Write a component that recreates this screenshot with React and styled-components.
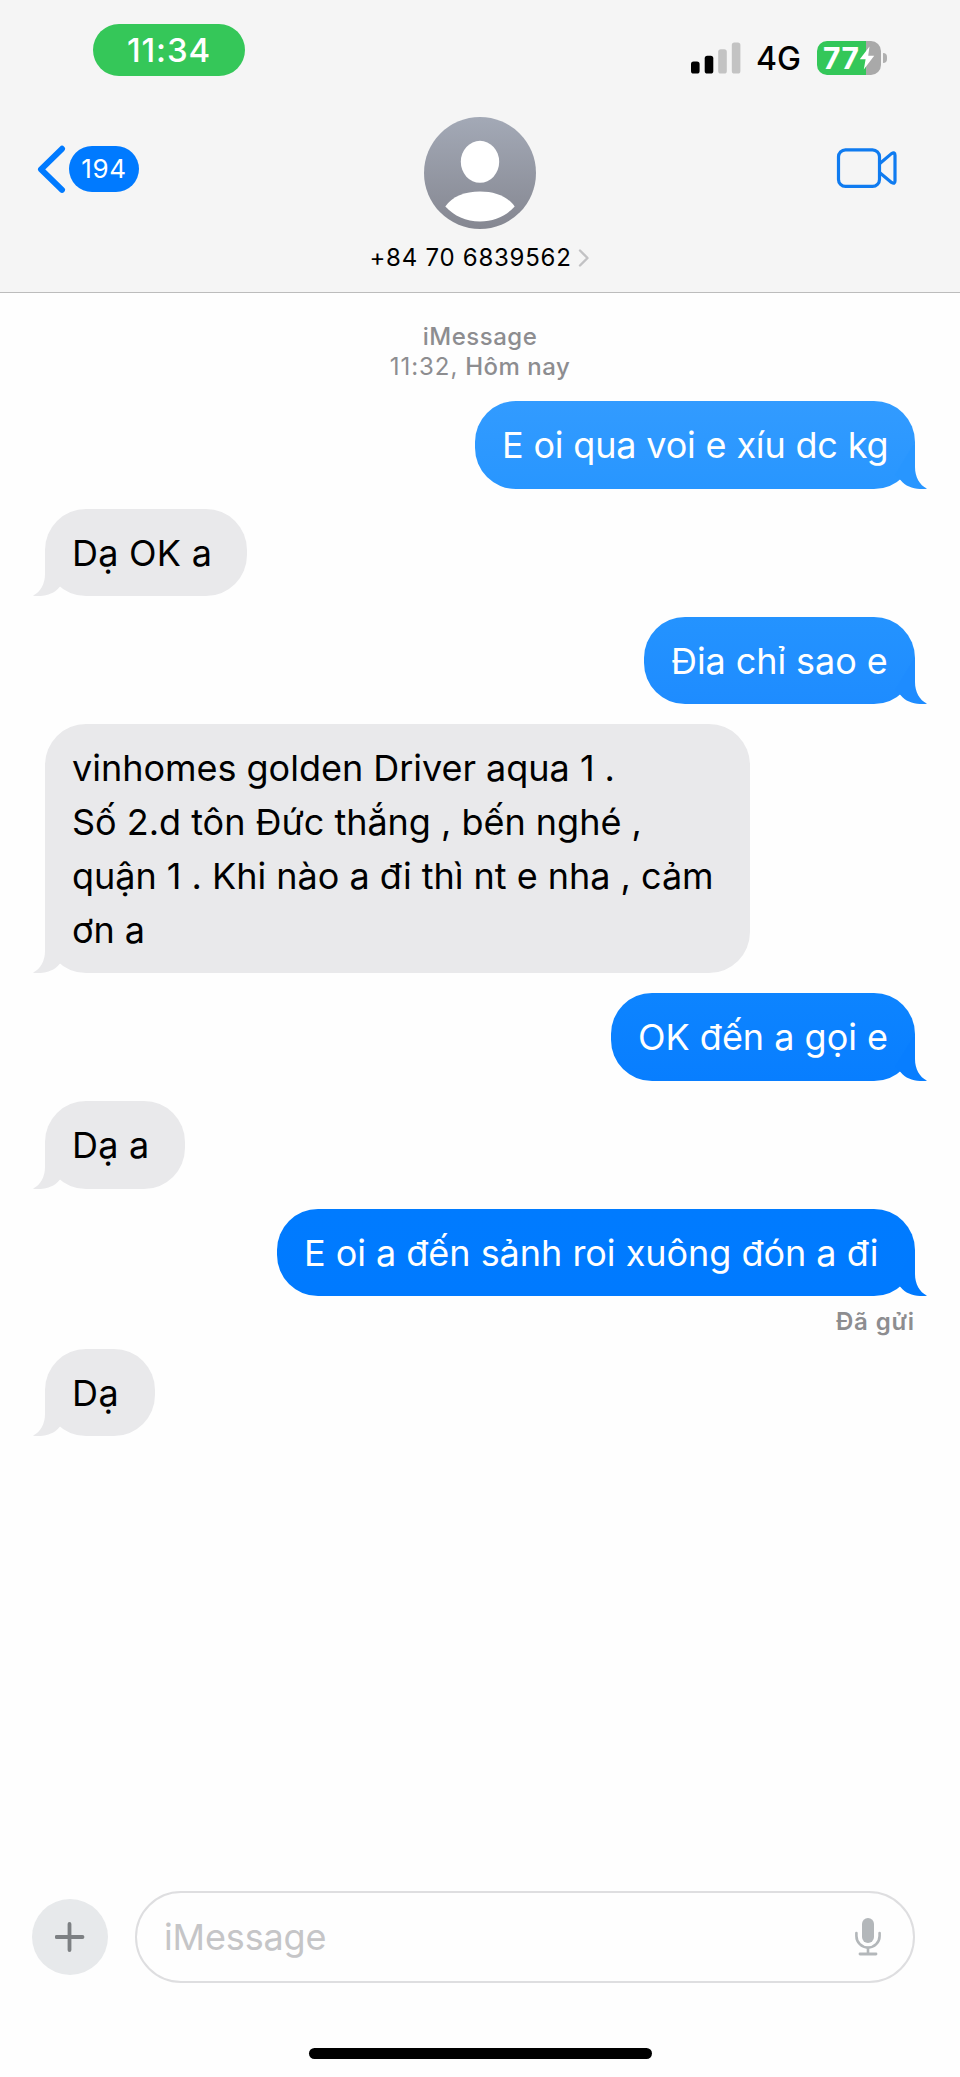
import React from 'react';
import styled, { createGlobalStyle } from 'styled-components';

const GlobalStyle = createGlobalStyle`
    * {
        box-sizing: border-box;
    }

    body {
        margin: 0;
        background: #fefefe;
        font-family: Inter, "Liberation Sans", sans-serif;
    }
`;

const Screen = styled.div`
    width: 960px;
    height: 2077px;
    display: flex;
    flex-direction: column;
    overflow: hidden;
    background: #fefefe;
    color: #000000;
`;

const Header = styled.header`
    height: 293px;
    flex: none;
    background: #f5f5f5;
    border-bottom: 1px solid #bcbcbc;
`;

const StatusBar = styled.div`
    height: 117px;
    display: flex;
    justify-content: space-between;
    align-items: flex-start;
    padding: 24px 73px 0 93px;
`;

const TimePill = styled.div`
    width: 152px;
    height: 52px;
    border-radius: 26px;
    background: #35c759;
    color: #ffffff;
    font-size: 33px;
    font-weight: 500;
    line-height: 53px;
    letter-spacing: 0.9px;
    text-align: center;
`;

const StatusIcons = styled.div`
    display: flex;
    align-items: center;
    padding-top: 15px;
`;

const Network = styled.span`
    width: 61px;
    margin: 3px 0 0 15px;
    font-size: 32px;
    font-weight: 500;
    line-height: 34px;
`;

const Battery = styled.div`
    width: 64px;
    height: 34px;
    display: flex;
    align-items: center;
    padding-left: 6px;
    border-radius: 10px;
    background: linear-gradient(90deg, #34c759 49px, #a9a9a9 49px);
    color: #ffffff;
    font-size: 30px;
    font-weight: 700;
    letter-spacing: 0.5px;
`;

const BatteryCap = styled.span`
    width: 4px;
    height: 10px;
    margin-left: 2px;
    border-radius: 0 5px 5px 0;
    background: #b0b0b0;
`;

const NavBar = styled.div`
    display: grid;
    grid-template-columns: 300px 360px 300px;
`;

const BackButton = styled.div`
    display: flex;
    align-items: center;
    height: 48px;
    margin-top: 28px;
    padding-left: 37px;
`;

const Badge = styled.span`
    width: 70px;
    height: 46px;
    margin-left: 3px;
    border-radius: 23px;
    background: #007aff;
    color: #ffffff;
    font-size: 26px;
    line-height: 46px;
    letter-spacing: 0.7px;
    text-align: center;
`;

const Contact = styled.div`
    display: flex;
    flex-direction: column;
    align-items: center;
`;

const ContactName = styled.div`
    display: flex;
    align-items: center;
    gap: 6px;
    margin-top: 12.5px;
    padding-right: 1px;
    font-size: 24px;
    line-height: 32px;
    letter-spacing: 0.75px;
    white-space: nowrap;
`;

const VideoButton = styled.div`
    display: flex;
    justify-content: flex-end;
    padding: 29px 62px 0 0;
`;

const Conversation = styled.main`
    flex: 1;
    display: flex;
    flex-direction: column;
    padding: 29.3px 45px 0;
`;

const Stamp = styled.div`
    display: flex;
    flex-direction: column;
    align-items: center;
    margin-bottom: 20.4px;
    color: #8d8d90;
    font-size: 24px;
    font-weight: 500;
    line-height: 29.3px;
    letter-spacing: 0.5px;
`;

const StampTime = styled.span`
    font-weight: 400;
    letter-spacing: 0.95px;
`;

const Bubble = styled.div`
    position: relative;
    align-self: ${(props) => (props.$mine ? 'flex-end' : 'flex-start')};
    width: ${(props) => props.$width}px;
    margin-bottom: ${(props) => (props.$last ? 0 : 20.2)}px;
    padding: 18.1px 0 15.6px 27px;
    border-radius: 41px;
    background: ${(props) => props.$fill || '#e9e9eb'};
    color: ${(props) => (props.$mine ? '#ffffff' : '#000000')};
    font-size: 36px;
    line-height: 53.8px;
    letter-spacing: ${(props) => props.$spacing || 0}px;
    white-space: pre;
`;

const Tail = styled.svg`
    position: absolute;
    bottom: 0;
    width: 50px;
    height: 44px;
    ${(props) => (props.$mine ? 'right: -12px;' : 'left: -12px; transform: scaleX(-1);')}
`;

const Receipt = styled.div`
    height: 52.7px;
    padding-top: 11.2px;
    color: #8d8d90;
    font-size: 24px;
    font-weight: 600;
    line-height: 30px;
    letter-spacing: 0.85px;
    text-align: right;
`;

const Composer = styled.footer`
    height: 155px;
    flex: none;
    display: flex;
    align-items: center;
    gap: 27px;
    padding: 0 45px 63px 32px;
`;

const PlusButton = styled.div`
    width: 76px;
    height: 76px;
    display: flex;
    align-items: center;
    justify-content: center;
    border-radius: 50%;
    background: #e7e9eb;
`;

const Field = styled.div`
    flex: 1;
    height: 92px;
    display: flex;
    align-items: center;
    justify-content: space-between;
    padding: 0 31px 0 27px;
    border: 2px solid #dedee0;
    border-radius: 46px;
    color: #c5c5c7;
    font-size: 36px;
    letter-spacing: -0.15px;
`;

const HomeArea = styled.div`
    height: 31px;
    flex: none;
    display: flex;
    justify-content: center;
`;

const HomeIndicator = styled.div`
    width: 343px;
    height: 11px;
    margin-top: 2px;
    border-radius: 6px;
    background: #000000;
`;

const messages = [
    { text: 'E oi qua voi e xíu dc kg', mine: true, width: 440, spacing: -0.17, from: '#329bff', to: '#2896ff' },
    { text: 'Dạ OK a ', width: 202, spacing: 0.25 },
    { text: 'Đia chỉ sao e', mine: true, width: 271, spacing: -0.08, from: '#2493ff', to: '#1e8cff' },
    {
        text: 'vinhomes golden Driver aqua 1 .\nSố 2.d tôn Đức thắng , bến nghé ,\nquận 1 . Khi nào a đi thì nt e nha , cảm\nơn a',
        width: 705,
        spacing: -0.02,
    },
    { text: 'OK đến a gọi e', mine: true, width: 304, from: '#0d84ff', to: '#087eff' },
    { text: 'Dạ a ', width: 140, spacing: 0.25 },
    { text: 'E oi a đến sảnh roi xuông đón a đi ', mine: true, width: 638, spacing: -0.03, from: '#007bff', to: '#007aff', receipt: 'Đã gửi' },
    { text: 'Dạ ', width: 110, spacing: 0.5 },
];

const SignalIcon = () => (
    <svg width="50" height="32" viewBox="0 0 50 32">
        <rect x="0" y="19.5" width="8.6" height="12" rx="2.6" fill="#000" />
        <rect x="13.7" y="13.8" width="8.6" height="17.7" rx="2.6" fill="#000" />
        <rect x="27.2" y="7.2" width="8.6" height="24.3" rx="2.6" fill="#c3c3c3" />
        <rect x="40.8" y="0.4" width="8.6" height="31.1" rx="2.6" fill="#c3c3c3" />
    </svg>
);

const BoltIcon = () => (
    <svg width="16" height="24" viewBox="0 0 16 24">
        <path d="M10.5 0.5 L0.8 13.2 H6.6 L4.8 23.5 L15.2 9.8 H9.2 Z" fill="#fff" />
    </svg>
);

const BackIcon = () => (
    <svg width="29" height="48" viewBox="0 0 29 48">
        <path d="M25 3.8 L4 24.3 L25 44.8" fill="none" stroke="#007aff" strokeWidth="6" strokeLinecap="round" strokeLinejoin="round" />
    </svg>
);

const AvatarIcon = () => (
    <svg width="112" height="112" viewBox="0 0 112 112">
        <defs>
            <linearGradient id="avatar" x1="0" y1="0" x2="0" y2="1">
                <stop offset="0" stopColor="#a3a9b6" />
                <stop offset="1" stopColor="#858791" />
            </linearGradient>
        </defs>
        <circle cx="56" cy="56" r="56" fill="url(#avatar)" />
        <ellipse cx="56" cy="44.8" rx="19.2" ry="21" fill="#fff" />
        <path d="M21.3 89.5 C28 79.5 41 74.5 56 74.5 C71 74.5 84 79.5 90.7 89.5 C82 99 70 104.5 56 104.5 C42 104.5 30 99 21.3 89.5 Z" fill="#fff" />
    </svg>
);

const DisclosureIcon = () => (
    <svg width="12" height="18" viewBox="0 0 12 18">
        <path d="M2 1.5 L9.5 9 L2 16.5" fill="none" stroke="#c2c2c4" strokeWidth="2.4" strokeLinecap="round" strokeLinejoin="round" />
    </svg>
);

const VideoIcon = () => (
    <svg width="62" height="44" viewBox="0 0 62 44">
        <g fill="none" stroke="#0f7bf0" strokeWidth="3.2" strokeLinejoin="round">
            <rect x="2.5" y="3.8" width="41" height="36.6" rx="7" />
            <path d="M43.5 17.8 L55.5 7.6 Q59 5.6 59 9.2 V35 Q59 38.6 55.5 36.4 L43.5 26.4" />
        </g>
    </svg>
);

const MicIcon = () => (
    <svg width="28" height="40" viewBox="0 0 28 40">
        <rect x="8" y="1" width="12" height="25" rx="6" fill="#b3b7ba" />
        <g fill="none" stroke="#b3b7ba" strokeWidth="2.6" strokeLinecap="round">
            <path d="M2.4 16 V19 A11.6 11.6 0 0 0 25.6 19 V16" />
            <path d="M14 31 V36" />
            <path d="M6 37 H22" strokeWidth="2.8" />
        </g>
    </svg>
);

const Message = ({ item, last }) => {
    const { text, mine, width, spacing, from, to } = item;
    return (
        <Bubble
            $mine={mine}
            $width={width}
            $spacing={spacing}
            $last={last || item.receipt}
            $fill={mine && `linear-gradient(180deg, ${from}, ${to})`}
        >
            {text}
            <Tail $mine={mine} viewBox="0 0 50 44">
                <path
                    d="M36 0 H38 V22 C38 32 42.5 40 50 43.7 C39 45 29.5 42.5 23.7 35.3 L18 30 Z"
                    fill={mine ? to : '#e9e9eb'}
                />
            </Tail>
        </Bubble>
    );
};

const App = () => {
    return (
        <Screen>
            <GlobalStyle />
            <Header>
                <StatusBar>
                    <TimePill>11:34</TimePill>
                    <StatusIcons>
                        <SignalIcon />
                        <Network>4G</Network>
                        <Battery>
                            77
                            <BoltIcon />
                        </Battery>
                        <BatteryCap />
                    </StatusIcons>
                </StatusBar>
                <NavBar>
                    <BackButton>
                        <BackIcon />
                        <Badge>194</Badge>
                    </BackButton>
                    <Contact>
                        <AvatarIcon />
                        <ContactName>
                            +84 70 6839562
                            <DisclosureIcon />
                        </ContactName>
                    </Contact>
                    <VideoButton>
                        <VideoIcon />
                    </VideoButton>
                </NavBar>
            </Header>
            <Conversation>
                <Stamp>
                    <span>iMessage</span>
                    <span>
                        <StampTime>11:32,</StampTime> Hôm nay
                    </span>
                </Stamp>
                {messages.map((item, index) => (
                    <React.Fragment key={index}>
                        <Message item={item} last={index === messages.length - 1} />
                        {item.receipt && <Receipt>{item.receipt}</Receipt>}
                    </React.Fragment>
                ))}
            </Conversation>
            <Composer>
                <PlusButton>
                    <svg width="30" height="30" viewBox="0 0 30 30">
                        <path d="M14.5 2 V28 M1.5 15 H27.5" stroke="#7d8083" strokeWidth="3.8" strokeLinecap="round" />
                    </svg>
                </PlusButton>
                <Field>
                    iMessage
                    <MicIcon />
                </Field>
            </Composer>
            <HomeArea>
                <HomeIndicator />
            </HomeArea>
        </Screen>
    );
};

export default App;
